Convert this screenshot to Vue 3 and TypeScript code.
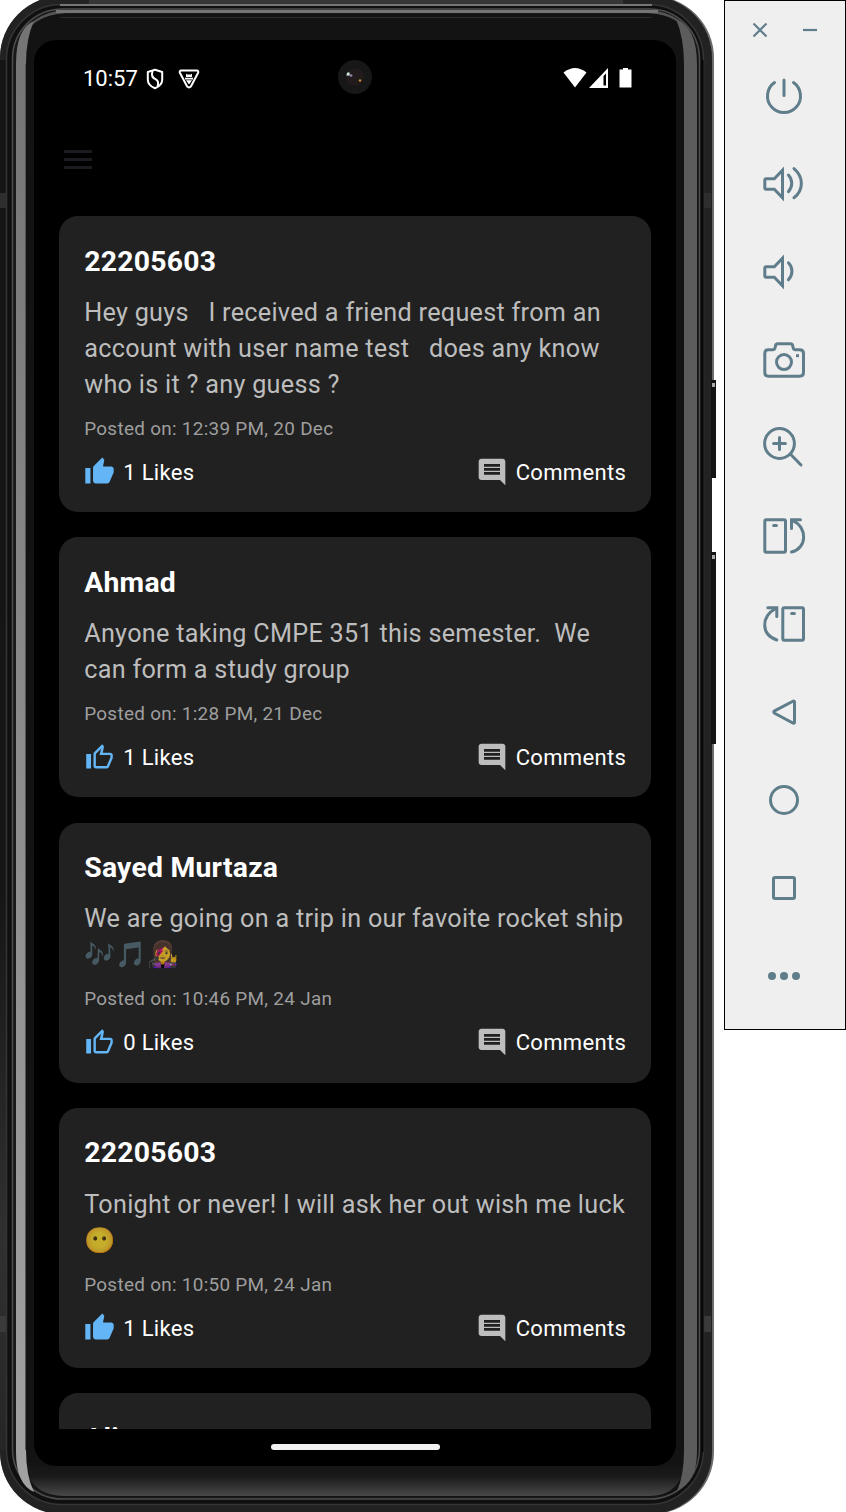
<script setup lang="ts">
interface Post {
  author: string
  lines: string[]
  emoji?: boolean
  posted: string
  likes: number
  liked: boolean
}

const posts: Post[] = [
  {
    author: '22205603',
    lines: [
      'Hey guys \u00a0 I received a friend request from an',
      'account with user name test \u00a0 does any know',
      'who is it ? any guess ?',
    ],
    posted: '12:39 PM, 20 Dec',
    likes: 1,
    liked: true,
  },
  {
    author: 'Ahmad',
    lines: ['Anyone taking CMPE 351 this semester. \u00a0We', 'can form a study group'],
    posted: '1:28 PM, 21 Dec',
    likes: 1,
    liked: false,
  },
  {
    author: 'Sayed Murtaza',
    lines: ['We are going on a trip in our favoite rocket ship', '🎶🎵👩‍🎤'],
    emoji: true,
    posted: '10:46 PM, 24 Jan',
    likes: 0,
    liked: false,
  },
  {
    author: '22205603',
    lines: ['Tonight or never! I will ask her out wish me luck', '😶'],
    emoji: true,
    posted: '10:50 PM, 24 Jan',
    likes: 1,
    liked: true,
  },
  { author: 'Ali', lines: [], posted: '', likes: 0, liked: false },
]

interface Tool {
  name: string
  paths: string[]
  fill?: string
}

const tools: Tool[] = [
  { name: 'Power', paths: ['M14.5 10.6A16.5 16.5 0 1 0 33.5 10.6', 'M24 8V23.5'] },
  {
    name: 'Volume up',
    paths: [
      'M22.5 10.3V37.7L14.3 29.3H6.3Q4.8 29.3 4.8 27.8V20.2Q4.8 18.7 6.3 18.7H14.3Z',
      'M28.4 15A12 12 0 0 1 28.4 31.6',
      'M34 8.6C43.8 17 43.8 30 34 37.7',
    ],
  },
  {
    name: 'Volume down',
    paths: [
      'M22.5 10.3V37.7L14.3 29.3H6.3Q4.8 29.3 4.8 27.8V20.2Q4.8 18.7 6.3 18.7H14.3Z',
      'M28.4 14.8A12 12 0 0 1 28.4 31.8',
    ],
  },
  {
    name: 'Screenshot',
    paths: [
      'M8.3 13.8H12.6Q14.6 13.8 15 12L15.6 9.4Q16 7.8 17.6 7.8H30.6Q32.2 7.8 32.6 9.4L33.2 12Q33.6 13.8 35.6 13.8H39.5Q43.5 13.8 43.5 17.5V36.5Q43.5 40.2 39.5 40.2H8.5Q4.8 40.2 4.8 36.5V17.5Q4.8 13.8 8.3 13.8Z',
      'M24 18.6A7.5 7.5 0 1 0 24 33.6A7.5 7.5 0 1 0 24 18.6Z',
    ],
    fill: 'M36 18.2h3v3h-3z',
  },
  {
    name: 'Zoom',
    paths: [
      'M19.5 4.6A14.9 14.9 0 1 0 19.5 34.4A14.9 14.9 0 1 0 19.5 4.6Z',
      'M30.5 30.3L41 41',
      'M13.6 19.5H25.4M19.5 13.6V25.4',
    ],
  },
  {
    name: 'Rotate left',
    paths: [
      'M6.3 7.8H24Q25.5 7.8 25.5 9.3V38.7Q25.5 40.2 24 40.2H6.3Q4.8 40.2 4.8 38.7V9.3Q4.8 7.8 6.3 7.8Z',
      'M13.7 13.5H16.4',
      'M40.5 7.8H31.5V16.5M32.3 8.3C48 15 47.2 36.5 31.5 40',
    ],
  },
  {
    name: 'Rotate right',
    paths: [
      'M24.3 7.8H42Q43.5 7.8 43.5 9.3V38.7Q43.5 40.2 42 40.2H24.3Q22.8 40.2 22.8 38.7V9.3Q22.8 7.8 24.3 7.8Z',
      'M31.7 13.5H34.4',
      'M7.8 7.8H16.8V16.5M16 8.3C0.4 17 1.2 34.5 16.8 40',
    ],
  },
  { name: 'Back', paths: ['M33.4 13L14.6 22.8Q12.8 24 14.6 25.2L33.4 35.2Q34.5 35.2 34.5 34V14.2Q34.5 13 33.4 13Z'] },
  { name: 'Home', paths: ['M24 10.5A13.5 13.5 0 1 0 24 37.5A13.5 13.5 0 1 0 24 10.5Z'] },
  { name: 'Overview', paths: ['M15 13.5H33Q34.5 13.5 34.5 15V33Q34.5 34.5 33 34.5H15Q13.5 34.5 13.5 33V15Q13.5 13.5 15 13.5Z'] },
  {
    name: 'More',
    paths: [],
    fill: 'M12 20a4 4 0 1 0 0 8a4 4 0 1 0 0-8zM24 20a4 4 0 1 0 0 8a4 4 0 1 0 0-8zM36 20a4 4 0 1 0 0 8a4 4 0 1 0 0-8z',
  },
]
</script>

<template>
  <div class="desktop">
    <div class="phone">
      <svg class="frame" width="716" height="1512" viewBox="0 0 716 1512" aria-hidden="true">
        <defs>
          <linearGradient id="shine" x1="0" x2="0" y1="0" y2="1">
            <stop offset="0" stop-color="#747474" />
            <stop offset="0.5" stop-color="#8c8c8c" />
            <stop offset="1" stop-color="#a2a2a2" />
          </linearGradient>
          <linearGradient id="shell" x1="0" x2="0" y1="0" y2="1">
            <stop offset="0" stop-color="#141414" />
            <stop offset="0.6" stop-color="#161616" />
            <stop offset="0.85" stop-color="#303030" />
            <stop offset="1" stop-color="#262626" />
          </linearGradient>
          <linearGradient id="chin" x1="0" x2="0" y1="0" y2="1">
            <stop offset="0" stop-color="#151515" />
            <stop offset="0.35" stop-color="#1a1a1a" />
            <stop offset="1" stop-color="#484848" />
          </linearGradient>
        </defs>
        <rect x="0" y="-4" width="714" height="1518" rx="62" fill="#6c6c6c" />
        <path d="M712 478h4v74h-4z" fill="#fff" />
        <rect x="0" y="-4" width="712" height="1518" rx="62" fill="#222" />
        <path d="M0 60H7V1450H0z" fill="url(#shell)" />
        <path d="M711 380h5v98h-5zM711 552h5v192h-5z" fill="#141414" />
        <path d="M712 383h3v4h-3zM712 555h3v4h-3z" fill="#aaa" />
        <path d="M89 0H623V4H89z" fill="#363636" />
        <path d="M0 193h7v15H0zM704 193h7v15h-7z" fill="#2e2e2e" />
        <path d="M0 1316h7v16H0zM704 1316h7v16h-7z" fill="#3a3a3a" />
        <rect x="6.500" y="4.500" width="697" height="1500" rx="55" fill="#101010" stroke="#343434" stroke-width="1.500" />
        <path d="M60 5H652" stroke="#757575" stroke-width="2" />
        <rect x="12.500" y="9" width="687" height="1490" rx="50" fill="#191919" stroke="#4d4d4d" stroke-width="1.500" />
        <path d="M20 44Q30 14 66 11.500H648Q684 14 693 44" fill="none" stroke="#555" stroke-width="3" />
        <path d="M56 11.500H658" stroke="#747474" stroke-width="3" />
        <rect x="16" y="14" width="682" height="1483" rx="46" fill="#131313" />
        <path d="M60 17.500H652" stroke="#2a2a2a" />
        <path d="M26 1466H684V1470Q676 1496 650 1496H64Q34 1496 26 1470z" fill="url(#chin)" />
        <path d="M34 21Q16 28 16 64V1452Q16 1484 34 1492Q26 1476 26 1450V64Q26 38 34 21z" fill="url(#shine)" />
        <path d="M676 19Q697 28 697 64V1452Q697 1482 677 1491Q684 1476 684 1450V64Q684 38 676 19z" fill="#5c5c5c" />
        <path d="M25.500 64V1450" stroke="#555" />
        <path d="M702.500 60V1452" stroke="#050505" stroke-width="2" />
      </svg>

      <div class="screen">
        <div class="status">
          <span class="clock">10:57</span>
          <svg class="shield" width="18" height="22" viewBox="0 0 18 22">
            <path d="M9 1.800L16.200 4V12Q16 17.500 9 20.200Q2 17.500 1.800 12V4Z" />
            <path d="M6.600 3Q4.500 9 9.500 11.200Q13.500 13.500 11.500 18.500" />
          </svg>
          <svg class="bug" width="22" height="20" viewBox="0 0 22 20">
            <path d="M3 1.500H19Q21 1.800 20 4L13 17.300Q11 19.600 9 17.300L2 4Q1 1.800 3 1.500Z" />
            <path class="solid" d="M8 4.500l1 1h4l1-1v3.500H8zM7 8.800h8v1.600H7zM8 11.200h6L11 15.500z" />
          </svg>
          <span class="lens"><i class="glass"></i></span>
          <svg class="signals" width="70" height="22" viewBox="0 0 70 22">
            <path d="M.5 5.500Q12 -3.500 23.500 5.500L12 20.500Z" />
            <path fill-rule="evenodd" d="M45 1V21H26ZM43 6.500L40.500 9V18.500H43Z" />
            <path d="M56.500 2.500H60V1H65V2.500H68.500V20.500H56.500Z" />
          </svg>
        </div>
        <div class="appbar"><span class="menu"><i></i><i></i><i></i></span></div>
        <main class="feed">
          <article v-for="(post, i) in posts" :key="i" class="card">
            <h2>{{ post.author }}</h2>
            <div v-if="post.lines.length" class="body">
              <p v-for="(line, n) in post.lines" :key="n" :class="{ emoji: post.emoji && n === 1 }">{{ line }}</p>
            </div>
            <div v-if="post.posted" class="date">Posted on: {{ post.posted }}</div>
            <div v-if="post.posted" class="actions">
              <span class="thumb">
                <svg v-if="post.liked" width="31.500" height="31.500" viewBox="0 0 24 24">
                  <path d="M1 21h4V9H1v12zm22-11c0-1.100-.9-2-2-2h-6.310l.95-4.570.03-.32c0-.41-.17-.79-.44-1.060L14.170 1 7.590 7.590C7.220 7.950 7 8.450 7 9v10c0 1.100.9 2 2 2h9c.83 0 1.540-.5 1.840-1.220l3.020-7.050c.09-.23.14-.47.14-.73v-2z" />
                </svg>
                <svg v-else width="29" height="29" viewBox="0 0 24 24">
                  <path fill-rule="evenodd" d="M9 21h9c.83 0 1.540-.5 1.840-1.220l3.020-7.050c.09-.23.14-.47.14-.73v-2c0-1.100-.9-2-2-2h-6.310l.95-4.570.03-.32c0-.41-.17-.79-.44-1.060L14.170 1 7.580 7.590C7.220 7.950 7 8.450 7 9v10c0 1.100.9 2 2 2zM9 9l4.340-4.340L12 10h9v2l-3 7H9V9zM1 9h4v12H1z" />
                </svg>
              </span>
              <span class="label">{{ post.likes }} Likes</span>
              <svg class="comment" width="32" height="32" viewBox="0 0 24 24">
                <path d="M21.990 4c0-1.100-.89-2-1.990-2H4c-1.100 0-2 .9-2 2v12c0 1.100.9 2 2 2h14l4 4-.01-18zM18 14H6v-2h12v2zm0-3H6V9h12v2zm0-3H6V6h12v2z" />
              </svg>
              <span class="label comments">Comments</span>
            </div>
          </article>
        </main>
        <div class="navbar"><span class="pill"></span></div>
      </div>
    </div>

    <aside class="toolbar">
      <div class="window">
        <svg width="16" height="16" viewBox="0 0 16 16"><path d="M1.500 1.500L14.500 14.500M14.500 1.500L1.500 14.500" /></svg>
        <svg width="16" height="16" viewBox="0 0 16 16"><path d="M1 8H15" /></svg>
      </div>
      <button v-for="tool in tools" :key="tool.name" class="tool" :aria-label="tool.name">
        <svg width="48" height="48" viewBox="0 0 48 48">
          <path v-for="d in tool.paths" :key="d" :d="d" />
          <path v-if="tool.fill" class="solid" :d="tool.fill" />
        </svg>
      </button>
    </aside>
  </div>
</template>

<style>
body {
  background: #fff;
}
</style>

<style scoped>
.desktop {
  display: flex;
  align-items: flex-start;
  gap: 8px;
  width: 846px;
  height: 1512px;
  overflow: hidden;
  font-family: Roboto, 'Noto Sans', sans-serif;
}
.phone {
  position: relative;
  flex: none;
  box-sizing: border-box;
  width: 716px;
  height: 1512px;
  padding: 40px 0 0 34px;
}
.frame {
  position: absolute;
  left: 0;
  top: 0;
}
.screen {
  position: relative;
  display: flex;
  flex-direction: column;
  width: 642px;
  height: 1426px;
  border-radius: 22px;
  background: #000;
  overflow: hidden;
}
.status {
  position: relative;
  flex: none;
  display: flex;
  align-items: center;
  box-sizing: border-box;
  height: 76px;
  padding: 0 43px 0 49px;
}
.clock {
  width: 63px;
  padding-top: 2px;
  color: #fff;
  font-size: 22px;
  letter-spacing: 0;
  line-height: 26px;
}
.status svg {
  fill: none;
  stroke: #fff;
  stroke-width: 2;
  stroke-linejoin: round;
}
.shield {
  margin-top: 1px;
}
.bug {
  margin: 2px 0 0 14px;
}
.status .bug .solid {
  fill: #fff;
  stroke: none;
}
.lens {
  position: absolute;
  left: 304px;
  top: 20px;
  width: 34px;
  height: 34px;
  border-radius: 50%;
  background: #171717;
}
.glass {
  position: absolute;
  left: 8px;
  top: 8px;
  width: 18px;
  height: 18px;
  border-radius: 50%;
  background:
    radial-gradient(circle at 2px 6px, #d0e8e0 0 1px, transparent 2.500px),
    radial-gradient(circle at 5px 7.500px, #9a88b0 0 0.500px, transparent 2px),
    radial-gradient(circle at 14px 12.500px, #d0903a 0 0.500px, transparent 1.800px),
    #211b1b;
}
.status .signals {
  margin-left: auto;
  fill: #fff;
  stroke: none;
}
.appbar {
  flex: none;
  display: flex;
  align-items: center;
  height: 100px;
  padding: 0 30px;
  margin-top: -6px;
  margin-bottom: 6.200px;
}
.menu {
  display: flex;
  flex-direction: column;
  gap: 5px;
  margin-top: -1px;
}
.menu i {
  width: 28px;
  height: 3px;
  background: #1c1b20;
}
.feed {
  flex: none;
  display: flex;
  flex-direction: column;
  gap: 25.400px;
  box-sizing: border-box;
  height: 1212.800px;
  padding: 0 25px;
  overflow: hidden;
}
.card {
  flex: none;
  display: flex;
  flex-direction: column;
  gap: 12.900px;
  box-sizing: border-box;
  padding: 25.400px 25.200px 25px;
  border-radius: 19px;
  background: #212121;
}
h2,
p {
  margin: 0;
}
h2 {
  color: #fff;
  font-size: 28.350px;
  font-weight: 700;
  line-height: 40.300px;
  letter-spacing: 0.240px;
}
.body {
  color: #bdbdbd;
  font-size: 25.200px;
  letter-spacing: 0.290px;
  line-height: 36px;
  white-space: nowrap;
}
.body p {
  height: 36px;
}
.emoji {
  opacity: 0.740;
}
.date {
  color: #9e9e9e;
  font-size: 18.900px;
  letter-spacing: 0.300px;
  line-height: 27px;
  margin-top: -0.700px;
  margin-bottom: 0.700px;
}
.actions {
  display: flex;
  align-items: center;
  height: 31.500px;
}
.thumb {
  display: flex;
  align-items: center;
  justify-content: center;
  width: 31px;
  height: 32px;
  margin: 1px 8.500px 0 -0.500px;
  fill: #64b5f6;
}
.label {
  padding-top: 3px;
  color: #fff;
  font-size: 22.050px;
  letter-spacing: 0.310px;
  line-height: 32px;
}
.comments {
  margin-right: -0.400px;
}
.comment {
  margin: 1px 7.200px 0 auto;
  fill: #bdbdbd;
}
.navbar {
  flex: none;
  display: flex;
  justify-content: center;
  padding-top: 15px;
}
.pill {
  width: 169px;
  height: 6px;
  border-radius: 3px;
  background: #f2f2f2;
}
.toolbar {
  flex: none;
  box-sizing: border-box;
  width: 122px;
  height: 1030px;
  border: 1px solid #000;
  background: #efefef;
}
.toolbar svg {
  fill: none;
  stroke: #607d8b;
  stroke-width: 3;
  stroke-linecap: round;
  stroke-linejoin: miter;
}
.toolbar svg .solid {
  fill: #607d8b;
  stroke: none;
}
.window {
  display: flex;
  justify-content: space-between;
  height: 51px;
  padding: 0 27px;
}
.window svg {
  margin-top: 21px;
}
.toolbar .window svg {
  stroke-width: 2.200;
  stroke-linecap: butt;
}
.tool {
  display: flex;
  align-items: center;
  justify-content: center;
  width: 118px;
  height: 88px;
  padding: 0;
  border: 0;
  background: none;
}
</style>
